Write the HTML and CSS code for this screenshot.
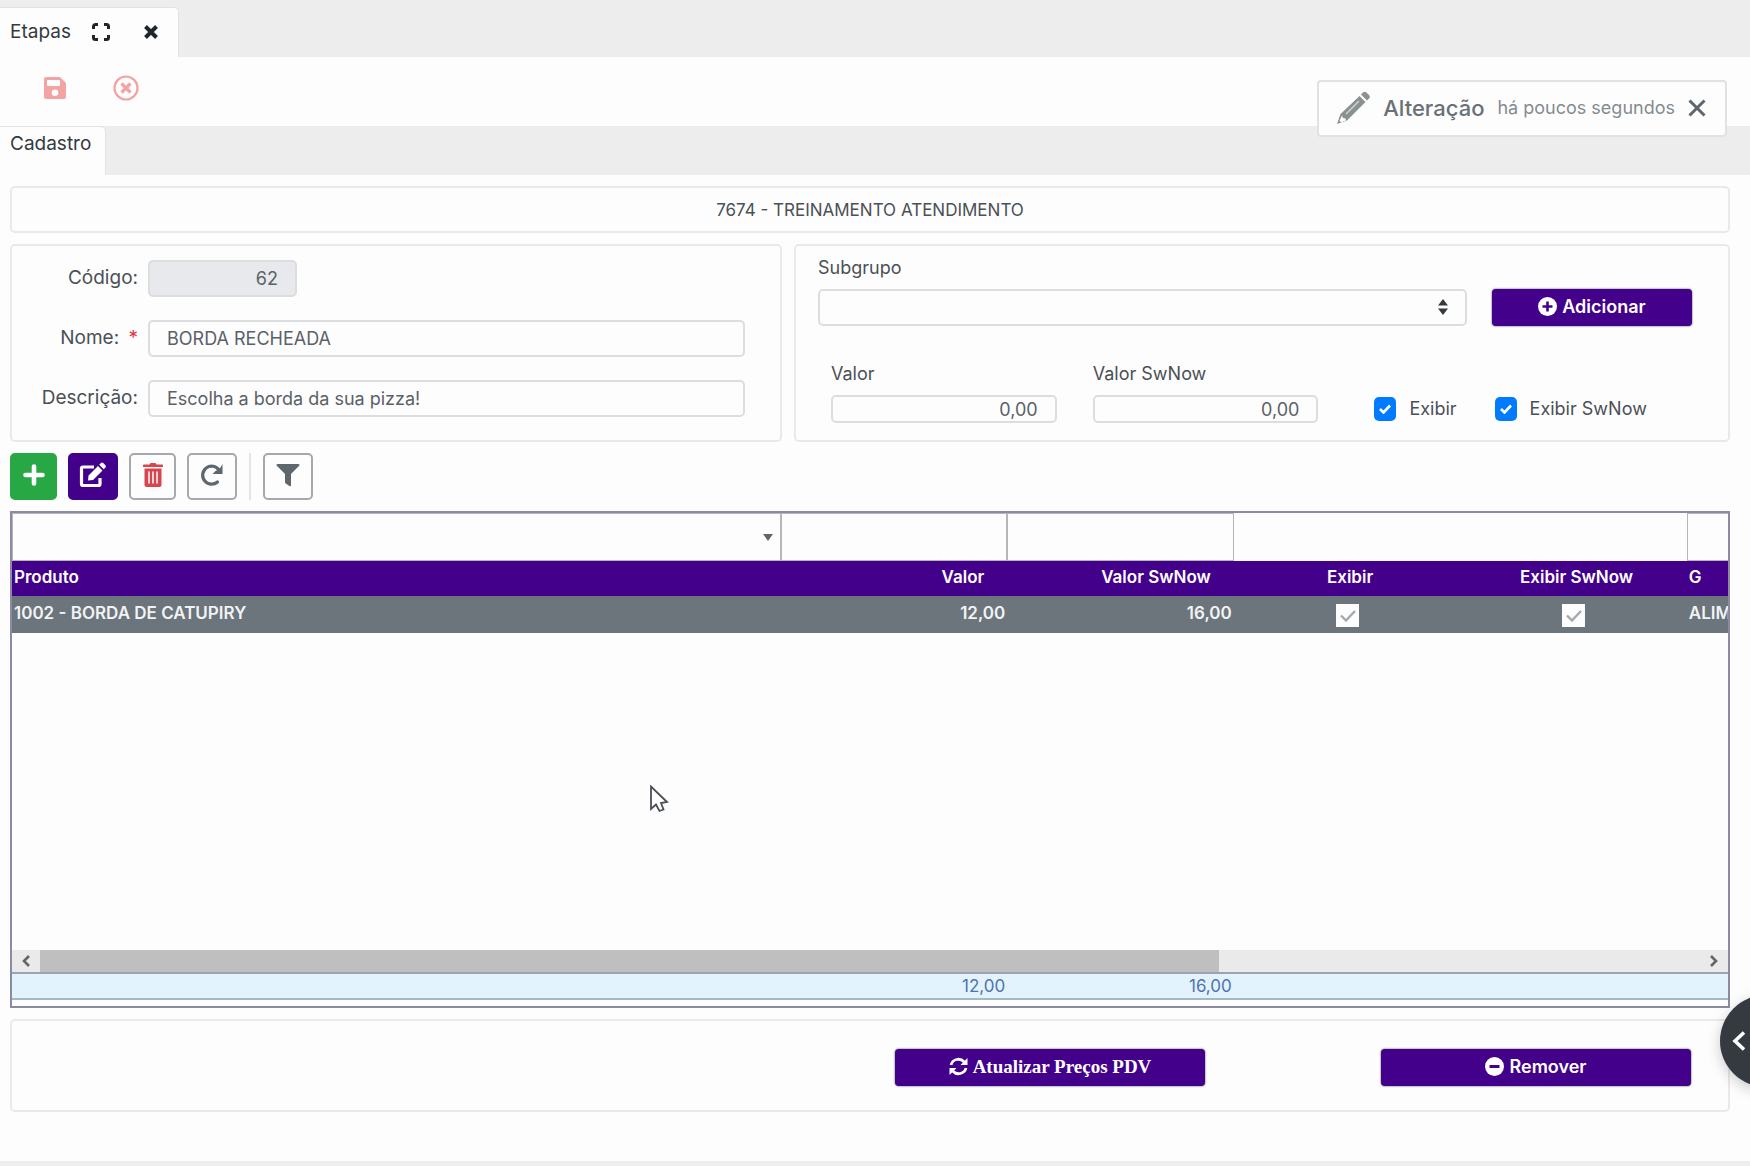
FILE: index.html
```html
<!DOCTYPE html>
<html lang="pt-BR">
<head>
  <meta charset="UTF-8">
  <meta name="viewport" content="width=device-width, initial-scale=1.0">
  <title>Etapas</title>
  <link rel="stylesheet" href="styles.css">
</head>
<body>
  <!-- Window tabs -->
  <header class="window-tabs">
    <div class="window-tab">
      <span>Etapas</span>
      <button class="icon-button" aria-label="Expandir">
        <svg width="18" height="18" viewBox="0 0 18 18" fill="none" stroke="#1f252b" stroke-width="3"><path d="M1.500 6V3.500a2 2 0 0 1 2-2H6M12 1.500h2.500a2 2 0 0 1 2 2V6M16.500 12v2.500a2 2 0 0 1-2 2H12M6 16.500H3.500a2 2 0 0 1-2-2V12"/></svg>
      </button>
      <button class="icon-button" aria-label="Fechar">
        <svg width="14" height="14" viewBox="0 0 14 14" stroke="#1f252b" stroke-width="4"><path d="M1.500 1.500l11 11M12.500 1.500l-11 11"/></svg>
      </button>
    </div>
  </header>

  <!-- Record actions -->
  <div class="record-actions">
    <button class="icon-button" aria-label="Salvar">
      <svg width="24" height="24" viewBox="0 0 24 24"><path fill="#f2a3a3" fill-rule="evenodd" d="M3 1h14l6 6v14a2 2 0 0 1-2 2H3a2 2 0 0 1-2-2V3a2 2 0 0 1 2-2zM5 4a1 1 0 0 0-1 1v4a1 1 0 0 0 1 1h11a1 1 0 0 0 1-1V5a1 1 0 0 0-1-1zM12 13.500a3.300 3.300 0 1 0 0 6.600 3.300 3.300 0 0 0 0-6.600z"/></svg>
    </button>
    <button class="icon-button" aria-label="Cancelar">
      <svg width="26" height="26" viewBox="0 0 26 26" fill="none" stroke="#f2a3a3"><circle cx="13" cy="13" r="11.500" stroke-width="2.200"/><path stroke-width="3.200" d="M8.500 8.500l9 9M17.500 8.500l-9 9"/></svg>
    </button>
  </div>

  <nav class="page-tabs">
    <a class="page-tab" href="#cadastro">Cadastro</a>
  </nav>

  <main class="content" id="cadastro">
    <div class="panel company">7674 - TREINAMENTO ATENDIMENTO</div>

    <div class="forms">
      <form class="panel step-form">
        <label for="codigo">Código:</label>
        <input class="field code-field" type="text" id="codigo" value="62" readonly>
        <label for="nome">Nome: <span class="required">*</span></label>
        <input class="field" type="text" id="nome" value="BORDA RECHEADA">
        <label for="descricao">Descrição:</label>
        <input class="field" type="text" id="descricao" value="Escolha a borda da sua pizza!">
      </form>

      <form class="panel group-form">
        <label for="subgrupo">Subgrupo</label>
        <div class="group-row">
          <div class="select-box">
            <select class="field" id="subgrupo"><option></option></select>
            <svg class="select-arrows" width="10" height="16" viewBox="0 0 10 16" fill="#343a40"><path d="M5 0l5 6.500H0zM5 16L0 9.500h10z"/></svg>
          </div>
          <button class="button" type="button">
            <svg width="19" height="19" viewBox="0 0 19 19"><circle cx="9.500" cy="9.500" r="9.500" fill="#fff"/><path stroke="#43008a" stroke-width="2.600" d="M9.500 4.500v10M4.500 9.500h10"/></svg>
            Adicionar
          </button>
        </div>
        <div class="value-row">
          <div class="value-box">
            <label for="valor">Valor</label>
            <input class="field small-field" type="text" id="valor" value="0,00">
          </div>
          <div class="value-box">
            <label for="valorSwNow">Valor SwNow</label>
            <input class="field small-field" type="text" id="valorSwNow" value="0,00">
          </div>
          <div class="checks">
            <label class="check">
              <input type="checkbox" checked>
              <svg class="tick" width="12" height="10" viewBox="0 0 12 10" fill="none" stroke="#fff" stroke-width="2.600"><path d="M1 5l3.500 3.500L11 1.500"/></svg>
              Exibir
            </label>
            <label class="check">
              <input type="checkbox" checked>
              <svg class="tick" width="12" height="10" viewBox="0 0 12 10" fill="none" stroke="#fff" stroke-width="2.600"><path d="M1 5l3.500 3.500L11 1.500"/></svg>
              Exibir SwNow
            </label>
          </div>
        </div>
      </form>
    </div>

    <!-- Grid toolbar -->
    <div class="toolbar">
      <button class="tool tool-add" aria-label="Adicionar">
        <svg width="22" height="22" viewBox="0 0 22 22" stroke="#fff" stroke-width="4.600" stroke-linecap="round"><path d="M11 2.500v17M2.500 11h17"/></svg>
      </button>
      <button class="tool tool-edit" aria-label="Editar">
        <svg width="28" height="26" viewBox="0 0 28 26"><path fill="none" stroke="#fff" stroke-width="3.200" stroke-linejoin="round" d="M15 5H4a1.500 1.500 0 0 0-1.500 1.500V22A1.500 1.500 0 0 0 4 23.500h15.500A1.500 1.500 0 0 0 21 22v-6"/><path fill="#fff" d="M9.500 13.500L19 4l4.500 4.500-9.500 9.500-5 .600zM20.200 2.800l1.500-1.500a2 2 0 0 1 2.800 0l1.700 1.700a2 2 0 0 1 0 2.800l-1.500 1.500z"/></svg>
      </button>
      <button class="tool tool-delete" aria-label="Excluir">
        <svg width="20" height="24" viewBox="0 0 20 24"><path fill="#d64550" d="M6.500 1.500L7.500 0h5l1 1.500H19a1 1 0 0 1 1 1V4H0V2.500a1 1 0 0 1 1-1zM1.500 5.500h17V22a2 2 0 0 1-2 2h-13a2 2 0 0 1-2-2z"/><path stroke="#fff" stroke-width="1.500" stroke-linecap="round" d="M6 9v11M10 9v11M14 9v11"/></svg>
      </button>
      <button class="tool" aria-label="Recarregar">
        <svg width="24" height="24" viewBox="0 0 24 24"><path fill="none" stroke="#5f676e" stroke-width="3.200" stroke-linecap="round" d="M17.500 19a9 9 0 1 1 1.500-12"/><path fill="#5f676e" d="M22.500 1v10h-10l3.500-3.500 3-.500z"/></svg>
      </button>
      <span class="tool-divider"></span>
      <button class="tool" aria-label="Filtrar">
        <svg width="24" height="24" viewBox="0 0 24 24" fill="#5f676e"><path d="M1.500 1h21a1 1 0 0 1 .700 1.700L15 11v11.500c0 .800-.900 1-1.500.600l-3.800-2.700a1.500 1.500 0 0 1-.700-1.200V11L.800 2.700A1 1 0 0 1 1.500 1z"/></svg>
      </button>
    </div>

    <!-- Products grid -->
    <section class="grid">
      <table class="grid-table">
        <colgroup><col class="col-product"><col class="col-data"><col class="col-data"><col class="col-data"><col class="col-data"><col class="col-group"></colgroup>
        <thead>
          <tr class="filter-row">
            <td class="filter-cell">
              <div class="select-box">
                <select class="filter" aria-label="Filtrar produto"><option></option></select>
                <svg class="filter-arrow" width="10" height="7" viewBox="0 0 10 7" fill="#5f676e"><path d="M0 0h10L5 7z"/></svg>
              </div>
            </td>
            <td class="filter-cell"><input class="filter" type="text" aria-label="Filtrar valor"></td>
            <td class="filter-cell"><input class="filter" type="text" aria-label="Filtrar valor SwNow"></td>
            <td></td>
            <td></td>
            <td class="filter-cell"><input class="filter filter-last" type="text" aria-label="Filtrar grupo"></td>
          </tr>
          <tr class="head-row">
            <th>Produto</th>
            <th class="number">Valor</th>
            <th class="number">Valor SwNow</th>
            <th class="center">Exibir</th>
            <th class="center">Exibir SwNow</th>
            <th>G</th>
          </tr>
        </thead>
        <tbody>
          <tr class="selected">
            <td>1002 - BORDA DE CATUPIRY</td>
            <td class="number">12,00</td>
            <td class="number">16,00</td>
            <td class="center">
              <span class="cell-check"><input type="checkbox" aria-label="Exibir" checked><svg width="16" height="12" viewBox="0 0 16 12" fill="none" stroke="#a3a9ae" stroke-width="2.400"><path d="M1 5.500l5 5L15 1"/></svg></span>
            </td>
            <td class="center">
              <span class="cell-check"><input type="checkbox" aria-label="Exibir SwNow" checked><svg width="16" height="12" viewBox="0 0 16 12" fill="none" stroke="#a3a9ae" stroke-width="2.400"><path d="M1 5.500l5 5L15 1"/></svg></span>
            </td>
            <td class="clipped">ALIM</td>
          </tr>
        </tbody>
      </table>
      <div class="grid-space"></div>
      <div class="scrollbar">
        <svg class="scroll-arrow" width="8" height="12" viewBox="0 0 8 12" fill="none" stroke="#5f676e" stroke-width="2.600"><path d="M7 1L2 6l5 5"/></svg>
        <div class="scroll-track"><div class="scroll-thumb"></div></div>
        <svg class="scroll-arrow" width="8" height="12" viewBox="0 0 8 12" fill="none" stroke="#5f676e" stroke-width="2.600"><path d="M1 1l5 5-5 5"/></svg>
      </div>
      <table class="grid-table totals">
        <colgroup><col class="col-product"><col class="col-data"><col class="col-data"><col class="col-data"><col class="col-data"><col class="col-group"></colgroup>
        <tbody>
          <tr>
            <td></td>
            <td class="number">12,00</td>
            <td class="number">16,00</td>
            <td></td>
            <td></td>
            <td></td>
          </tr>
        </tbody>
      </table>
    </section>

    <div class="panel footer-actions">
      <button class="button button-serif" type="button">
        <svg width="19" height="19" viewBox="0 0 19 19"><path fill="none" stroke="#fff" stroke-width="2.800" d="M2 8a7.600 7.600 0 0 1 13-3.200M17 11a7.600 7.600 0 0 1-13 3.200"/><path fill="#fff" d="M18.500 1v7h-7zM.500 18v-7h7z"/></svg>
        Atualizar Preços PDV
      </button>
      <button class="button" type="button">
        <svg width="19" height="19" viewBox="0 0 19 19"><circle cx="9.500" cy="9.500" r="9.500" fill="#fff"/><path stroke="#43008a" stroke-width="3" d="M4.500 9.500h10"/></svg>
        Remover
      </button>
    </div>
  </main>

  <footer class="bottom-bar"></footer>

  <!-- Notice over the page -->
  <div class="toast" role="status">
    <svg width="34" height="34" viewBox="0 0 34 34"><path fill="#8b9093" d="M25 3.500l2-2a2.500 2.500 0 0 1 3.500 0l2.500 2.500a2.500 2.500 0 0 1 0 3.500l-2 2zM23.500 5l6 6L11 29.500 1 33l3.500-10z"/><path fill="#fdfdfd" d="M6 24.500l1 2.500 2.500.500.500 2-5 1.800-1.500-1.500z"/><path stroke="#d0d3d5" stroke-width="1.500" d="M10 23L23 10"/></svg>
    <strong>Alteração</strong>
    <span>há poucos segundos</span>
    <button class="icon-button" aria-label="Fechar aviso">
      <svg width="18" height="18" viewBox="0 0 18 18" stroke="#5f676e" stroke-width="3"><path d="M1.500 1.500l15 15M16.500 1.500l-15 15"/></svg>
    </button>
  </div>

  <button class="drawer-button" aria-label="Abrir painel">
    <svg width="14" height="20" viewBox="0 0 14 20" fill="none" stroke="#fff" stroke-width="3.600"><path d="M12 1.500L3 10l9 8.500"/></svg>
  </button>

  <svg class="pointer" width="20" height="28" viewBox="0 0 20 28" fill="#fff" stroke="#4a4f58" stroke-width="1.800"><path d="M2 1.500V24l5-4.500L10.500 26l4-1.500L12 18l6-1z"/></svg>
</body>
</html>
```
FILE: styles.css
```css
* {
  box-sizing: border-box;
}

body {
  position: relative;
  display: flex;
  flex-direction: column;
  min-height: 100vh;
  margin: 0;
  overflow-x: hidden;
  background-color: #fdfdfd;
  color: #4a5056;
  font-family: Inter, "Open Sans", sans-serif;
  font-size: 18px;
  line-height: 24px;
}

button, input, select {
  font: inherit;
  color: inherit;
}

.icon-button {
  display: flex;
  padding: 0;
  border: none;
  background: none;
  cursor: pointer;
}

/* Tabs */
.window-tabs {
  display: flex;
  height: 57px;
  padding-top: 7px;
  background-color: #ededed;
}

.window-tab {
  display: flex;
  align-items: center;
  padding: 0 20px 2px 10px;
  border: 1px solid #e2e2e2;
  border-left: none;
  border-bottom: none;
  border-radius: 0 5px 0 0;
  background-color: #fdfdfd;
  color: #343a40;
  font-size: 19px;
}

.window-tab .icon-button {
  margin-left: 21px;
}

.window-tab .icon-button + .icon-button {
  margin-left: 34px;
}

.record-actions {
  display: flex;
  align-items: center;
  gap: 46px;
  height: 69px;
  padding: 0 43px 7px;
}

.page-tabs {
  display: flex;
  height: 49px;
  background-color: #ededed;
}

.page-tab {
  padding: 5px 14px 0 10px;
  border-top: 1px solid #e2e2e2;
  border-right: 1px solid #e2e2e2;
  border-radius: 0 5px 0 0;
  background-color: #fdfdfd;
  color: #343a40;
  font-size: 19px;
  text-decoration: none;
}

/* Page content */
.content {
  flex: 1;
  display: flex;
  flex-direction: column;
  gap: 11px;
  padding: 11px 20px 49px 10px;
}

.panel {
  border: 2px solid #e9e9e9;
  border-radius: 5px;
}

.company {
  padding: 10px 10px 9px;
  text-align: center;
  font-size: 17px;
}

.forms {
  display: grid;
  grid-template-columns: 772fr 936fr;
  gap: 12px;
}

.field {
  width: 100%;
  height: 37px;
  padding: 0 17px;
  border: 2px solid #dcdddf;
  border-radius: 5px;
  background-color: #fdfdfd;
  color: #5b6167;
}

.step-form {
  display: grid;
  grid-template-columns: 114px 1fr;
  align-content: start;
  align-items: center;
  gap: 23px 10px;
  padding: 14px 35px 23px 12px;
}

.step-form label {
  padding-bottom: 2px;
  font-size: 19px;
  text-align: right;
}

.step-form .code-field {
  width: 149px;
  background-color: #e8e9ec;
  text-align: right;
}

.required {
  margin-left: 4px;
  color: #dc3545;
}

.group-form {
  padding: 10px 36px 17px 22px;
}

.group-row {
  display: grid;
  grid-template-columns: 1fr 200px;
  gap: 25px;
  padding-top: 9px;
}

.select-box {
  position: relative;
}

.select-box select {
  display: block;
  appearance: none;
}

.select-arrows {
  position: absolute;
  top: 10px;
  right: 19px;
}

.button {
  display: flex;
  justify-content: center;
  align-items: center;
  gap: 5px;
  height: 37px;
  padding: 0 0 2px;
  border: none;
  border-radius: 4px;
  background-color: #43008a;
  box-shadow: 0 0 2px #343a40;
  color: #ffffff;
  font-weight: 600;
  cursor: pointer;
}

.value-row {
  display: grid;
  grid-template-columns: 226fr 226fr 338fr;
  align-items: end;
  gap: 36px;
  padding: 36px 0 0 13px;
}

.value-box label {
  display: block;
  margin-bottom: 9px;
}

.small-field {
  display: block;
  height: 28px;
  text-align: right;
}

.checks {
  display: flex;
  gap: 38px;
  padding-left: 20px;
}

.check {
  position: relative;
  display: flex;
  align-items: center;
  gap: 13px;
  height: 28px;
  white-space: nowrap;
}

.check input {
  width: 22px;
  height: 24px;
  margin: 0;
  border-radius: 5px;
  background-color: #007bff;
  appearance: none;
}

.tick {
  position: absolute;
  top: 9px;
  left: 5px;
}

/* Toolbar */
.toolbar {
  display: flex;
  gap: 11px;
}

.tool {
  display: flex;
  justify-content: center;
  align-items: center;
  width: 50px;
  height: 47px;
  padding: 0 0 3px;
  border: 2px solid #a5a9ac;
  border-radius: 5px;
  background-color: #fdfdfd;
  cursor: pointer;
}

.tool-add,
.tool-delete {
  width: 47px;
}

.tool-add {
  border-color: #28a745;
  background-color: #28a745;
}

.tool-edit {
  border-color: #43008a;
  background-color: #43008a;
}

.tool-divider {
  width: 2px;
  margin: 0 1px;
  background-color: #e4e4e4;
}

/* Grid */
.grid {
  flex: 1;
  display: flex;
  flex-direction: column;
  min-height: 300px;
  padding-bottom: 6px;
  border: 2px solid #8a8ba3;
  overflow: hidden;
}

.grid-table {
  width: 100%;
  border-collapse: collapse;
  table-layout: fixed;
  font-size: 17px;
}

.col-product {
  width: 44.8%;
}

.col-data {
  width: 13.2%;
}

.col-group {
  width: 2.4%;
}

.grid-table th,
.grid-table td {
  padding: 0 2px 3px;
  text-align: left;
  white-space: nowrap;
}

.grid-table .filter-cell {
  padding: 0;
}

.filter {
  display: block;
  width: 100%;
  height: 48px;
  border: 1px solid #b4b6b8;
  border-radius: 0;
  background-color: #fdfdfd;
}

.filter-last {
  border-right: none;
}

.filter-arrow {
  position: absolute;
  top: 21px;
  right: 8px;
}

.head-row {
  height: 35px;
  background-color: #43008a;
  color: #ffffff;
}

.head-row th {
  font-weight: 600;
}

.selected {
  height: 37px;
  background-color: #6c757b;
  color: #f1f3f5;
  font-weight: 600;
}

.grid-table .number {
  text-align: right;
}

.grid-table .head-row .number {
  padding-right: 23px;
}

.grid-table .center {
  text-align: center;
}

.grid-table .head-row .center {
  padding-left: 8px;
}

.grid-table .selected .center {
  padding-bottom: 0;
}

.clipped {
  overflow: hidden;
}

.cell-check {
  position: relative;
  display: inline-block;
  vertical-align: middle;
}

.cell-check input {
  display: block;
  width: 23px;
  height: 23px;
  margin: 0;
  background-color: #fdfdfd;
  appearance: none;
}

.cell-check svg {
  position: absolute;
  top: 6px;
  left: 4px;
}

.grid-space {
  flex: 1;
}

.scrollbar {
  display: flex;
  align-items: center;
  height: 22px;
  background-color: #eaeaea;
}

.scroll-arrow {
  margin: 0 10px;
}

.scroll-track {
  flex: 1;
  height: 100%;
}

.scroll-thumb {
  width: 71%;
  height: 100%;
  background-color: #bfbfbf;
}

.totals {
  border-top: 2px solid #9ba5b1;
  border-bottom: 2px solid #a9b7c1;
  background-color: #e3f3fd;
  color: #4f74ad;
}

.grid-table.totals td {
  height: 26px;
  padding-bottom: 0;
}

/* Bottom */
.footer-actions {
  display: grid;
  grid-template-columns: 670fr 310fr 310fr;
  gap: 176px;
  padding: 28px 37px 24px;
}

.button-serif {
  grid-column: 2;
  font-family: "Liberation Serif", serif;
  font-size: 19px;
  font-weight: 700;
}

.bottom-bar {
  height: 5px;
  background-color: #eeeeee;
}

/* Floating items */
.toast {
  position: absolute;
  top: 80px;
  right: 23px;
  display: flex;
  align-items: center;
  gap: 13px;
  height: 57px;
  padding: 0 19px 2px 17px;
  border: 2px solid #e2e2e2;
  border-radius: 4px;
  background-color: #fdfdfd;
  color: #858b90;
}

.toast strong {
  color: #697077;
  font-size: 22px;
  font-weight: 500;
}

.drawer-button {
  position: absolute;
  top: 995px;
  right: -62px;
  width: 92px;
  height: 92px;
  padding: 0 0 0 12px;
  border: none;
  border-radius: 50%;
  background-color: #343a40;
  box-shadow: 0 4px 14px rgba(0, 0, 0, 0.2);
  text-align: left;
  cursor: pointer;
}

.drawer-button svg {
  display: block;
}

.pointer {
  position: absolute;
  top: 785px;
  left: 649px;
}
```
